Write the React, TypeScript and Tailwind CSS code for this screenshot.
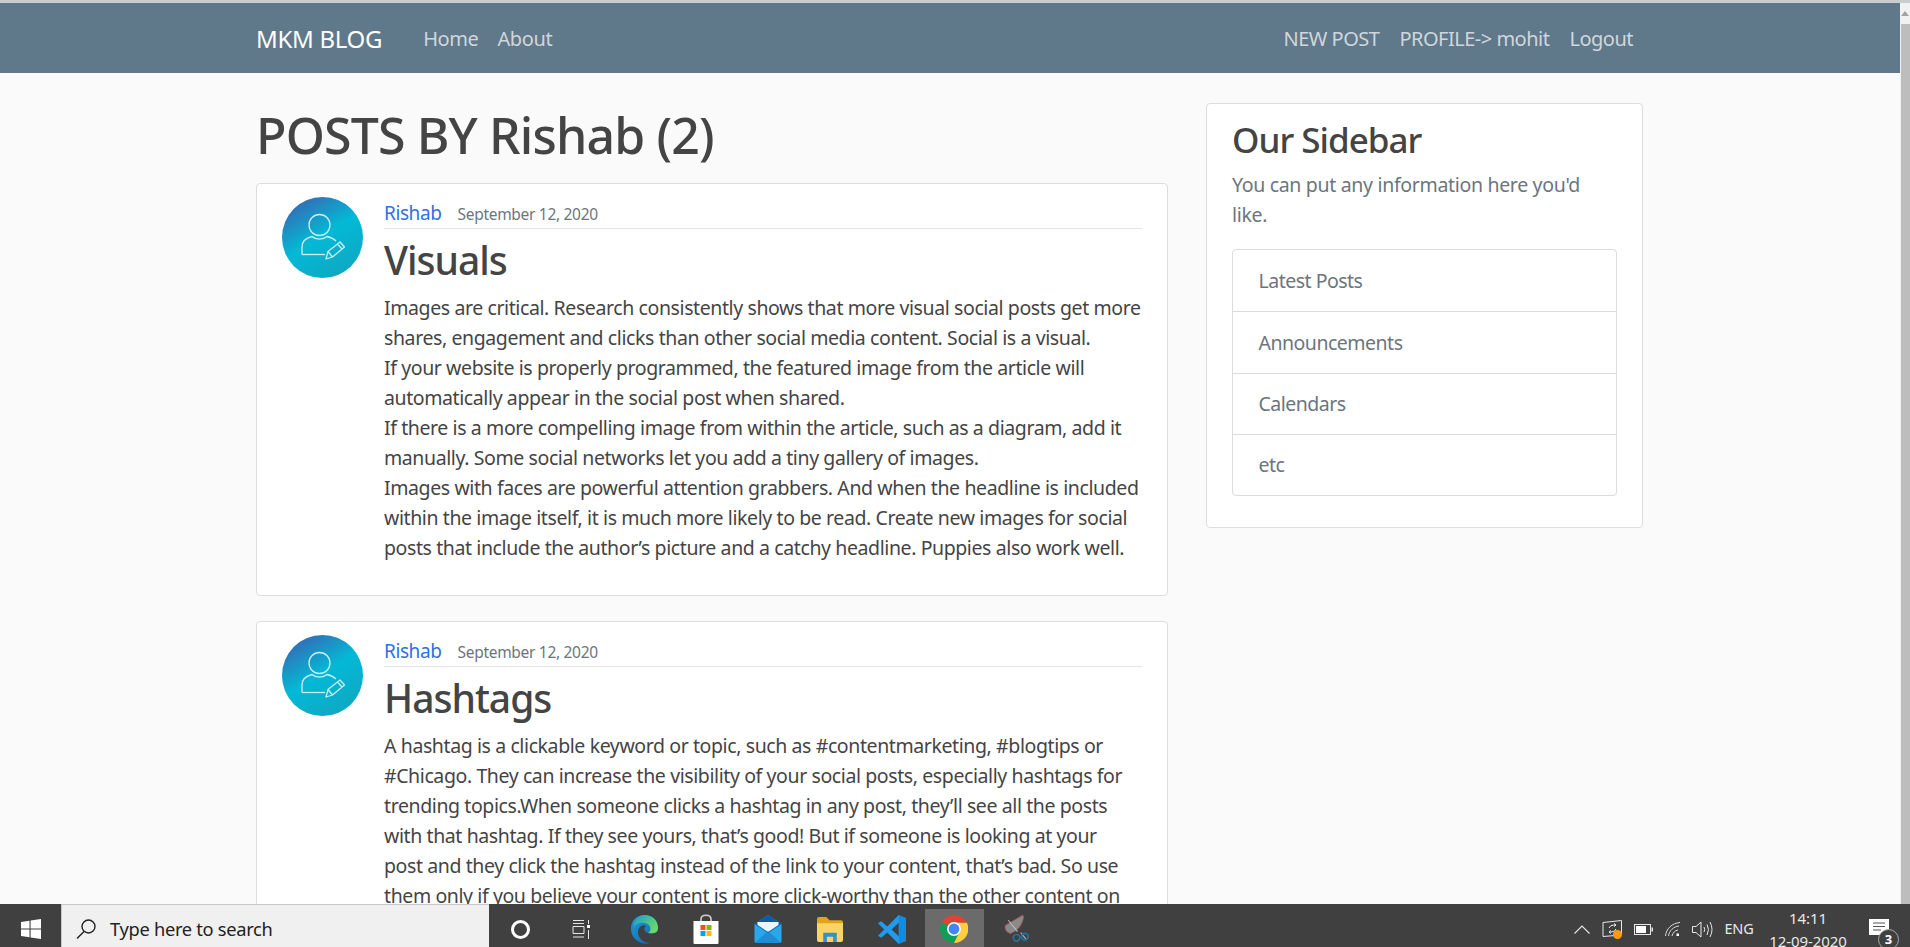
const sans = "font-['Noto_Sans',sans-serif]";

const post1 = [
  "Images are critical. Research consistently shows that more visual social posts get more",
  "shares, engagement and clicks than other social media content. Social is a visual.",
  "If your website is properly programmed, the featured image from the article will",
  "automatically appear in the social post when shared.",
  "If there is a more compelling image from within the article, such as a diagram, add it",
  "manually. Some social networks let you add a tiny gallery of images.",
  "Images with faces are powerful attention grabbers. And when the headline is included",
  "within the image itself, it is much more likely to be read. Create new images for social",
  "posts that include the author’s picture and a catchy headline. Puppies also work well.",
];

const post2 = [
  "A hashtag is a clickable keyword or topic, such as #contentmarketing, #blogtips or",
  "#Chicago. They can increase the visibility of your social posts, especially hashtags for",
  "trending topics.When someone clicks a hashtag in any post, they’ll see all the posts",
  "with that hashtag. If they see yours, that’s good! But if someone is looking at your",
  "post and they click the hashtag instead of the link to your content, that’s bad. So use",
  "them only if you believe your content is more click-worthy than the other content on",
  "your page.",
];

const sideLinks = ["Latest Posts", "Announcements", "Calendars", "etc"];

function Avatar({ id }: { id: string }) {
  return (
    <svg width="81" height="81" viewBox="0 0 81 81" className="shrink-0">
      <defs>
        <linearGradient id={id} x1="0.15" y1="0" x2="0.75" y2="1">
          <stop offset="0" stopColor="#3b62b0" />
          <stop offset="0.5" stopColor="#03b9d6" />
          <stop offset="1" stopColor="#0fa7c1" />
        </linearGradient>
      </defs>
      <circle cx="40.5" cy="40.5" r="40.5" fill={`url(#${id})`} />
      <g fill="none" stroke="#c9eef4" strokeWidth="1.3" strokeLinejoin="round">
        <circle cx="37.5" cy="28" r="10.5" />
        <path d="M20 57.5 V50 C20 44 24 41 30 39.5 C34 43 41 43 45 39.5 C49 40.5 52 42 54 44" />
        <path d="M20 57.5 H43" />
        <path d="M44 62 L46 54.5 L58 45 L62.5 50 L50.5 60 Z M46 54.5 L50.5 60 M55.5 47 L60 52" />
      </g>
    </svg>
  );
}

function Post({ id, title, lines }: { id: string; title: string; lines: string[] }) {
  return (
    <article className="flex gap-[21px] bg-white border border-[#dddddd] rounded-[4px] pl-[25px] pr-[25px] pt-[13px] pb-[32px] mb-[25px]">
      <Avatar id={id} />
      <div className="flex-1 min-w-0">
        <div className="border-b border-[#e3e3e3] h-[32px] pt-[3px] flex items-baseline">
          <a className="text-[19px] text-[#2f6fe8] tracking-[-0.4px] leading-[27px]">Rishab</a>
          <small className="ml-[16px] text-[15.5px] text-[#6c757d] tracking-[-0.3px]">September 12, 2020</small>
        </div>
        <h2 className="text-[39px] leading-[48px] font-[550] text-[#444444] tracking-[-1px] mt-[7px] mb-[9px]">{title}</h2>
        <p className="text-[19.5px] leading-[30px] text-[#444444] tracking-[-0.4px] whitespace-nowrap">
          {lines.map((line) => (
            <span key={line} className="block">{line}</span>
          ))}
        </p>
      </div>
    </article>
  );
}

function Navbar() {
  return (
    <header className="h-[70px] bg-[#5f788a] shrink-0 pl-[256px] pr-[267px] pt-[2px] flex items-center justify-between">
      <div className="flex items-center">
        <span className="text-[24px] text-white tracking-[-0.3px]">MKM BLOG</span>
        <nav className="flex gap-[19px] ml-[41px] text-[20px] text-[#cfd7dc] tracking-[-0.4px]">
          <a>Home</a>
          <a>About</a>
        </nav>
      </div>
      <nav className="flex gap-[20px] text-[20px] text-[#cfd7dc] tracking-[-0.5px]">
        <a>NEW POST</a>
        <a>PROFILE-&gt; mohit</a>
        <a>Logout</a>
      </nav>
    </header>
  );
}

function Sidebar() {
  return (
    <aside className="w-[437px] h-[425px] bg-white border border-[#dddddd] rounded-[4px] px-[25px] pt-[15px] shrink-0">
      <h3 className="text-[35px] leading-[42px] font-[550] text-[#444444] tracking-[-1px] mb-[9px]">Our Sidebar</h3>
      <p className="text-[19.5px] leading-[30px] text-[#6c757d] tracking-[-0.32px] mb-[19px]">
        <span className="block whitespace-nowrap">You can put any information here you'd</span>
        <span className="block">like.</span>
      </p>
      <ul className="border border-[#dcdcdc] rounded-[4px]">
        {sideLinks.map((t, i) => (
          <li key={t} className={`h-[61.3px] flex items-center px-[25.5px] text-[19.5px] text-[#6c757d] tracking-[-0.5px] ${i ? "border-t border-[#dcdcdc]" : ""}`}>{t}</li>
        ))}
      </ul>
    </aside>
  );
}

function Scrollbar() {
  return (
    <div className="w-[10px] shrink-0 bg-[#f1f1f1] flex flex-col">
      <div className="h-[21px] flex items-start justify-center pt-[8px]">
        <div className="w-0 h-0 border-l-[4px] border-r-[4px] border-b-[5px] border-l-transparent border-r-transparent border-b-[#a3a3a3]" />
      </div>
      <div className="flex-1 bg-[#bdbdbd] ml-[1px]" />
    </div>
  );
}

function TaskSlot({ children }: { children: React.ReactNode }) {
  return <div className="w-[62px] pt-[7px] flex items-center justify-center">{children}</div>;
}

function TraySlot({ w, children }: { w: string; children: React.ReactNode }) {
  return <div className={`${w} pt-[7px] flex items-center justify-center`}>{children}</div>;
}

function Taskbar() {
  return (
    <footer className="h-[43px] bg-[#404040] shrink-0 flex items-stretch text-white overflow-hidden">
      <div className="w-[61px] pt-[7px] flex items-center justify-center">
        <svg width="20" height="20" viewBox="0 0 20 20" fill="#fff">
          <path d="M0 3 L8.5 1.8 V9.4 H0 Z M9.6 1.6 L20 0 V9.4 H9.6 Z M0 10.6 H8.5 V18.2 L0 17 Z M9.6 10.6 H20 V20 L9.6 18.4 Z" />
        </svg>
      </div>
      <div className="w-[428px] bg-[#f0f0f0] border-t border-l border-[#c8c8c8] flex items-center pt-[6px]">
        <svg width="22" height="22" viewBox="0 0 22 22" fill="none" stroke="#222" strokeWidth="1.4" className="ml-[13px]">
          <circle cx="13.5" cy="8.5" r="6.5" />
          <path d="M9 13.5 L2 20.5" />
        </svg>
        <span className="ml-[13px] text-[18.3px] text-[#222] tracking-[-0.3px]">Type here to search</span>
      </div>
      <TaskSlot>
        <div className="w-[19px] h-[19px] rounded-full border-[3px] border-white" />
      </TaskSlot>
      <TaskSlot>
        <svg width="20" height="19" viewBox="0 0 20 19" fill="none" stroke="#e6e6e6" strokeWidth="1">
          <path d="M1 0.5 H12 M1 3.5 H12 M1 6.5 H12 V13.5 H1 Z M1 17 H12 M16.5 0 V4 M16.5 10 V19" />
          <rect x="15" y="5" width="3" height="3" fill="#fff" stroke="none" />
        </svg>
      </TaskSlot>
      <TaskSlot>
        <svg width="29" height="29" viewBox="0 0 27 29">
          <defs>
            <linearGradient id="edge1" x1="0" y1="0" x2="1" y2="1">
              <stop offset="0" stopColor="#1d9bd8" />
              <stop offset="1" stopColor="#1760a8" />
            </linearGradient>
            <linearGradient id="edge2" x1="0" y1="0" x2="1" y2="0.6">
              <stop offset="0" stopColor="#1aa0c8" />
              <stop offset="1" stopColor="#6bd96a" />
            </linearGradient>
          </defs>
          <path d="M0 14 C0 5 6 0 13.5 0 C21 0 27 5 27 13 C27 18 22 19 17 18 C13 17 12 13 15 11 C12 9 7 12 7 17 C7 23 12 28 19 28 C12 31 0 25 0 14 Z" fill="url(#edge1)" />
          <path d="M3 8 C5 3 9 0 13.5 0 C21 0 27 5 27 13 C27 18 22 19 17 18 C21 16 20 9 14 8 C9 7 5 9 3 12 Z" fill="url(#edge2)" />
        </svg>
      </TaskSlot>
      <TaskSlot>
        <svg width="28" height="30" viewBox="0 0 25 30">
          <path d="M7.5 8 V5 C7.5 0 17.5 0 17.5 5 V8" fill="none" stroke="#cfcfcf" strokeWidth="1.6" />
          <path d="M0 7 H25 V29 Q25 30 24 30 H1 Q0 30 0 29 Z" fill="#fff" />
          <rect x="7" y="11" width="5" height="5" fill="#f25022" />
          <rect x="13" y="11" width="5" height="5" fill="#7fba00" />
          <rect x="7" y="17" width="5" height="5" fill="#00a4ef" />
          <rect x="13" y="17" width="5" height="5" fill="#ffb900" />
        </svg>
      </TaskSlot>
      <TaskSlot>
        <svg width="30" height="28" viewBox="0 0 27 28">
          <path d="M0 9 L13.5 0 L27 9 V26 Q27 28 25 28 H2 Q0 28 0 26 Z" fill="#28a8ea" />
          <path d="M0 9 L13.5 0 L27 9 L13.5 18 Z" fill="#0b5cab" />
          <path d="M3 7 H24 V10 L13.5 17 L3 10 Z" fill="#e9f6fd" />
          <path d="M0 28 L13.5 16 L27 28 Z" fill="#1a86d0" opacity="0.75" />
        </svg>
      </TaskSlot>
      <TaskSlot>
        <svg width="28" height="25" viewBox="0 0 25 24">
          <path d="M0 2 Q0 0 2 0 H9 L12 3 H23 Q25 3 25 5 V8 H0 Z" fill="#e0a31f" />
          <path d="M0 6 H25 V22 Q25 24 23 24 H2 Q0 24 0 22 Z" fill="#fcd466" />
          <path d="M6 24 V15 H19 V24 H15.5 V19 H9.5 V24 Z" fill="#2f8fd8" />
        </svg>
      </TaskSlot>
      <TaskSlot>
        <svg width="30" height="29" viewBox="0 0 27 28">
          <path d="M20 0 L27 3 V25 L20 28 L9 17 L3 22 L0 20 L6 14 L0 8 L3 6 L9 11 Z M20 7.5 L13 14 L20 20.5 Z" fill="#1f9cf0" />
          <path d="M20 0 L27 3 V25 L20 28 Z" fill="#0c7cd5" opacity="0.55" />
        </svg>
      </TaskSlot>
      <div className="w-[62px] flex justify-center pt-[5px]">
        <div className="w-[59px] bg-[#6b6b6b] flex items-center justify-center pt-[2px]">
          <svg width="28" height="28" viewBox="0 0 25 25">
            <circle cx="12.5" cy="12.5" r="12.5" fill="#db4437" />
            <path d="M12.5 12.5 L1.5 6.5 A12.5 12.5 0 0 0 12.5 25 L18 14 Z" fill="#0f9d58" />
            <path d="M12.5 7 H24 A12.5 12.5 0 0 1 12.5 25 L18 14 Z" fill="#ffcd40" />
            <circle cx="12.5" cy="12.5" r="6.2" fill="#fff" />
            <circle cx="12.5" cy="12.5" r="4.8" fill="#4285f4" />
          </svg>
        </div>
      </div>
      <TaskSlot>
        <svg width="28" height="30" viewBox="0 0 25 29">
          <path d="M2 11 L19 1 L20 3 Q18 15 7 19 Q1 17 2 11 Z" fill="#8a8a8a" stroke="#a34a4a" strokeWidth="0.8" />
          <path d="M5 6 L14 17 M17 18 L22 24" stroke="#bbb" strokeWidth="1" />
          <circle cx="13" cy="23" r="3.2" fill="none" stroke="#2a6f9e" strokeWidth="1.6" />
          <circle cx="21" cy="22" r="3.2" fill="none" stroke="#2a6f9e" strokeWidth="1.6" />
        </svg>
      </TaskSlot>

      <div className="ml-auto flex items-stretch pr-[7px]">
        <TraySlot w="w-[30px]">
          <svg width="16" height="9" viewBox="0 0 16 9" fill="none" stroke="#e8e8e8" strokeWidth="1.1"><path d="M0.5 8.5 L8 1 L15.5 8.5" /></svg>
        </TraySlot>
        <TraySlot w="w-[31px]">
          <div className="relative w-[21px] h-[18px]">
            <svg width="21" height="18" viewBox="0 0 21 18" fill="none" stroke="#e8e8e8" strokeWidth="1">
              <path d="M1 2.5 L19.5 0.5 V15 L1 16.5 Z" />
              <path d="M7 8 Q8 5 12 5 L14 5 M14 9 Q13 12 9 12 L7 12 M12 3.5 L14 5 L12 6.5 M9 10.5 L7 12 L9 13.5" />
            </svg>
            <div className="absolute left-[11px] top-[10px] w-[9px] h-[9px] rounded-full bg-[#ff9a0a]" />
          </div>
        </TraySlot>
        <TraySlot w="w-[30px]">
          <svg width="19" height="11" viewBox="0 0 19 11">
            <rect x="0.5" y="0.5" width="16" height="10" fill="none" stroke="#e8e8e8" />
            <rect x="2" y="2" width="10" height="7" fill="#fff" />
            <rect x="17.5" y="3.5" width="1.5" height="4" fill="#e8e8e8" />
          </svg>
        </TraySlot>
        <TraySlot w="w-[30px]">
          <svg width="16" height="15" viewBox="0 0 16 15" fill="none" stroke="#d8d8d8" strokeWidth="1">
            <path d="M0.5 14 C1 7 7 1 15 0.5 M3.5 14 C4 9 8.5 4.5 14 4 M7 14 C7.5 11 10 8.5 13 8" />
            <rect x="11.5" y="11.5" width="2.5" height="2.5" fill="#fff" stroke="none" />
          </svg>
        </TraySlot>
        <TraySlot w="w-[29px]">
          <svg width="21" height="17" viewBox="0 0 21 17" fill="none" stroke="#e8e8e8" strokeWidth="1">
            <path d="M0.5 5.5 H4 L9 1 V16 L4 11.5 H0.5 Z" />
            <path d="M12 6 Q13.5 8.5 12 11 M15 3.5 Q18 8.5 15 14 M18 1 Q22 8.5 18 16" />
          </svg>
        </TraySlot>
        <TraySlot w="w-[44px]">
          <span className="text-[14.5px] text-[#e8e8e8] tracking-[-0.2px]">ENG</span>
        </TraySlot>
        <div className="w-[94px] pt-[3px] text-center text-[15px] leading-[23px] text-[#e8e8e8] tracking-[-0.1px]">
          <div>14:11</div>
          <div className="whitespace-nowrap">12-09-2020</div>
        </div>
        <div className="w-[48px] pl-[14px] pt-[15px]">
          <div className="relative w-[20px] h-[17px]">
            <svg width="20" height="17" viewBox="0 0 20 17">
              <path d="M0 0 H20 V16 H0 Z" fill="#fff" />
              <path d="M4 4 H16 M4 7.5 H16 M4 11 H12" stroke="#555" strokeWidth="1" />
            </svg>
            <div className="absolute left-[9px] top-[10px] w-[21px] h-[21px] rounded-full bg-[#404040] border border-[#aaa] flex items-center justify-center text-[13px] font-bold text-white leading-none">3</div>
          </div>
        </div>
      </div>
    </footer>
  );
}

export default function App() {
  return (
    <div className={`h-[947px] flex flex-col overflow-hidden bg-[#fafafa] ${sans}`}>
      <div className="h-[3px] bg-[#c9cdd0] shrink-0" />
      <div className="flex-1 min-h-0 flex">
        <div className="flex-1 min-w-0 flex flex-col overflow-hidden">
          <Navbar />
          <main className="flex gap-[38px] pl-[256px] pt-[30px]">
            <div className="w-[912px] shrink-0">
              <h1 className="text-[50px] leading-[60px] font-[550] text-[#444444] tracking-[-0.85px] mb-[18px] mt-[2px]">POSTS BY Rishab (2)</h1>
              <Post id="av1" title="Visuals" lines={post1} />
              <Post id="av2" title="Hashtags" lines={post2} />
            </div>
            <Sidebar />
          </main>
        </div>
        <Scrollbar />
      </div>
      <Taskbar />
    </div>
  );
}
